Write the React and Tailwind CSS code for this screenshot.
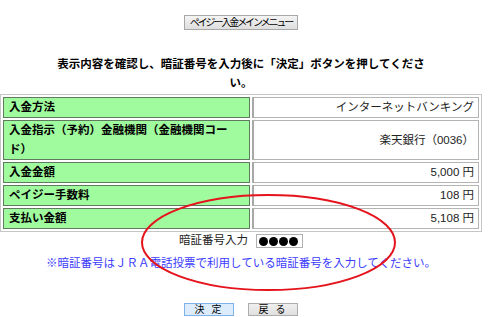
export default function App() {
  const font = { fontFamily: '"Liberation Sans", "Noto Sans CJK JP", sans-serif' };
  const rows = [
    { label: "入金方法", value: "インターネットバンキング", h: "h-[21px]" },
    { label: "入金指示（予約）金融機関（金融機関コード）", value: "楽天銀行（0036）", h: "h-[40px]" },
    { label: "入金金額", value: "5,000 円", h: "h-[21px]" },
    { label: "ペイジー手数料", value: "108 円", h: "h-[21px]" },
    { label: "支払い金額", value: "5,108 円", h: "h-[21px]" },
  ];
  return (
    <div className="relative w-[500px] h-[317px] bg-white overflow-hidden text-black" style={font}>
      <div className="w-[482px] flex flex-col items-center pt-[15px]">
        <button className="h-[15px] px-[5px] flex items-center border border-[#a8a8a8] bg-gradient-to-b from-[#f4f4f4] to-[#dedede] text-[10px] leading-none tracking-[-2.1px] text-black">
          ペイジー入金メインメニュー
        </button>
        <div className="w-[372px] mt-[25px] text-center font-bold text-[11.5px] leading-[19px]">
          表示内容を確認し、暗証番号を入力後に「決定」ボタンを押してください。
        </div>
        <table className="mt-[1px] w-[482px] table-fixed border-separate border-spacing-[2px] border border-[#c6c6c6] text-[11.5px]">
          <colgroup>
            <col className="w-[247px]" />
            <col />
          </colgroup>
          <tbody>
            {rows.map((r, i) => (
              <tr key={i}>
                <td className={`${r.h} bg-[#a0fb9e] border border-[#5f7a5f] px-[5px] py-0 align-middle font-bold leading-[19px]`}>
                  {r.label}
                </td>
                <td className={`${r.h} bg-white border border-[#b4b4b4] border-l-2 border-l-[#a8a8a8] px-[4px] py-0 text-right align-middle text-[#222] leading-[19px]`}>
                  {r.value}
                </td>
              </tr>
            ))}
          </tbody>
        </table>
        <div className="mt-[1px] h-[16px] flex items-center gap-[8px] text-[11.5px]">
          <span className="text-[#222]">暗証番号入力</span>
          <div className="w-[47px] h-[14px] border border-[#b0b0b0] bg-white flex items-center gap-[1px] pl-[2px]">
            <span className="w-[9px] h-[9px] rounded-full bg-black" />
            <span className="w-[9px] h-[9px] rounded-full bg-black" />
            <span className="w-[9px] h-[9px] rounded-full bg-black" />
            <span className="w-[9px] h-[9px] rounded-full bg-black" />
          </div>
        </div>
        <div className="mt-[5px] text-[11.5px] leading-[18px] text-[#3c3cff]">
          ※暗証番号はＪＲＡ電話投票で利用している暗証番号を入力してください。
        </div>
        <div className="mt-[31px] flex gap-[14px]">
          <button className="w-[50px] h-[13px] flex items-center justify-center border border-[#7eb4ea] bg-[#dcecfc] text-[10px] leading-none tracking-[2px] text-black">
            決 定
          </button>
          <button className="w-[50px] h-[13px] flex items-center justify-center border border-[#adadad] bg-gradient-to-b from-[#efefef] to-[#e0e0e0] text-[10px] leading-none tracking-[2px] text-black">
            戻 る
          </button>
        </div>
      </div>
      <svg className="absolute left-0 top-0 pointer-events-none" width="500" height="317">
        <ellipse cx="268.5" cy="242.5" rx="126.5" ry="47.5" fill="none" stroke="#e5131b" strokeWidth="2" />
      </svg>
    </div>
  );
}
